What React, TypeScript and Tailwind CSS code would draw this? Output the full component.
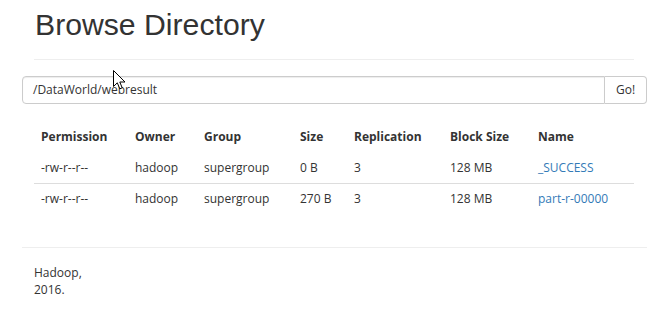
import React from "react";

const rows = [
    { perm: "-rw-r--r--", owner: "hadoop", group: "supergroup", size: "0 B", repl: "3", block: "128 MB", name: "_SUCCESS" },
    { perm: "-rw-r--r--", owner: "hadoop", group: "supergroup", size: "270 B", repl: "3", block: "128 MB", name: "part-r-00000" },
];

const cols = "grid grid-cols-[94px_69px_96px_54px_96px_88px_103px]";

const App: React.FC = () => {
    return (
        <div className="relative w-[664px] h-[316px] bg-white text-[#333] font-['Open_Sans',sans-serif] text-[12px] overflow-hidden">
            <div className="px-[22px] pr-[17px]">
                <div className="px-[12px] pr-[13px]">
                    <h1 className="pt-[7px] text-[30.2px] leading-[35px] font-['Liberation_Sans',Arial,sans-serif] text-[#333] pl-px">
                        Browse Directory
                    </h1>
                    <div className="mt-[17px] border-t border-[#eee]" />
                </div>

                <div className="mt-[16px] flex h-[28px]">
                    <div className="flex-1 border border-[#ccc] rounded-l-[4px] flex items-center px-[10px] shadow-[inset_0_1px_1px_rgba(0,0,0,0.075)]">
                        /DataWorld/webresult
                    </div>
                    <button className="w-[42px] border border-l-0 border-[#ccc] rounded-r-[4px] bg-white text-[#333] text-[12px]">
                        Go!
                    </button>
                </div>

                <div className="mt-[17px] px-[12px] pr-[13px]">
                    <div className={`${cols} h-[31px] items-center font-bold`}>
                        <div className="px-[7px]">Permission</div>
                        <div className="px-[7px]">Owner</div>
                        <div className="px-[7px]">Group</div>
                        <div className="px-[7px]">Size</div>
                        <div className="px-[7px]">Replication</div>
                        <div className="px-[7px]">Block Size</div>
                        <div className="px-[7px]">Name</div>
                    </div>
                    {rows.map((r, i) => (
                        <div key={i} className={`${cols} h-[31px] items-center ${i > 0 ? "border-t border-[#ddd]" : ""}`}>
                            <div className="px-[7px]">{r.perm}</div>
                            <div className="px-[7px]">{r.owner}</div>
                            <div className="px-[7px]">{r.group}</div>
                            <div className="px-[7px]">{r.size}</div>
                            <div className="px-[7px]">{r.repl}</div>
                            <div className="px-[7px]">{r.block}</div>
                            <div className="px-[7px]">
                                <a className="text-[#337ab7]">{r.name}</a>
                            </div>
                        </div>
                    ))}
                </div>

                <div className="mt-[33px] border-t border-[#eee]" />
                <div className="mt-[16px] px-[12px] leading-[17px]">
                    <p>Hadoop,</p>
                    <p>2016.</p>
                </div>
            </div>

            {/* mouse pointer left in the screenshot */}
            <svg className="absolute left-[113px] top-[70px]" width="13" height="20" viewBox="0 0 13 20">
                <path d="M0.5 0.5 L0.5 16.5 L4.3 12.8 L6.8 18.8 L9.2 17.8 L6.8 12 L12 12 Z" fill="white" stroke="black" strokeWidth="1" strokeLinejoin="miter" />
            </svg>
        </div>
    );
};

export default App;
